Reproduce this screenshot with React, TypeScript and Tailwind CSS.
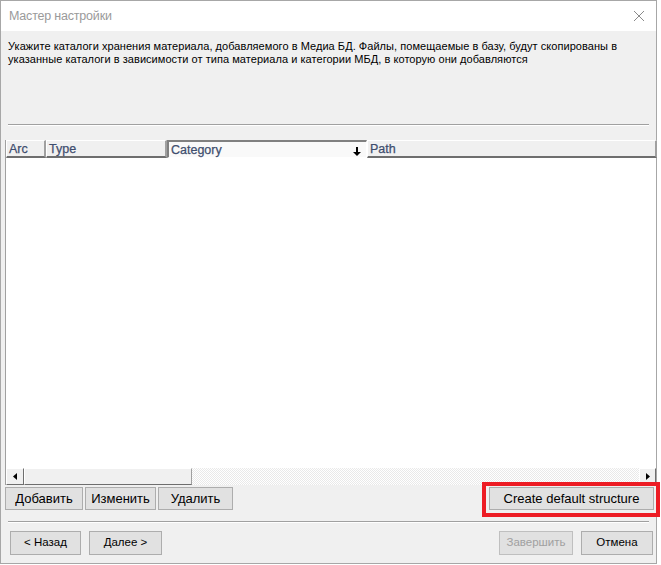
import React from 'react'

const font = { fontFamily: '"Liberation Sans", Arial, sans-serif' }

function HeaderCell({ label, width, pressed = false, sort = false }: { label: string; width: string; pressed?: boolean; sort?: boolean }) {
  return (
    <div
      className={`relative flex h-full shrink-0 items-center px-[2px] pt-[2px] text-[12.5px] text-[#3f4e6e] ${width} ${
        pressed
          ? 'border-t-2 border-l-2 border-t-[#808080] border-l-[#808080] border-b border-r border-b-white border-r-white bg-[#f9f9f9]'
          : 'border-t border-l border-t-white border-l-white border-b-2 border-r-2 border-b-[#6e6e6e] border-r-[#a0a0a0] bg-[#f0f0f0]'
      }`}
    >
      <span className="[-webkit-text-stroke:0.25px_#3f4e6e]">{label}</span>
      {sort && (
        <svg className="absolute right-[5px] top-[5px]" width="8" height="9" viewBox="0 0 8 9">
          <path d="M3 0h2v5h3L4 9 0 5h3z" fill="#000" />
        </svg>
      )}
    </div>
  )
}

function Btn({ children, className = '', disabled = false }: { children: React.ReactNode; className?: string; disabled?: boolean }) {
  return (
    <button
      className={`flex items-center justify-center border border-[#adadad] bg-[#e1e1e1] ${
        disabled ? 'border-[#bfbfbf] bg-[#cccccc]/40 text-[#a0a0a0]' : 'text-black'
      } ${className}`}
    >
      {children}
    </button>
  )
}

function Separator({ className = '' }: { className?: string }) {
  return <div className={`h-[2px] border-t border-t-[#a0a0a0] border-b border-b-white ${className}`} />
}

export default function App() {
  return (
    <div className="relative h-[565px] w-[661px] overflow-hidden bg-white" style={font}>
      <div className="flex h-[564px] w-[657px] flex-col border border-[#a7a7a7] bg-[#f0f0f0]">
        {/* title */}
        <div className="flex h-[30px] shrink-0 items-center justify-between bg-white pl-[8px] pr-[6px]">
          <span className="text-[12.5px] tracking-[-0.2px] text-[#9a9a9a]">Мастер настройки</span>
          <svg width="12" height="12" viewBox="0 0 12 12" className="mr-[5px]">
            <path d="M1 1l10 10M11 1L1 11" stroke="#8a8a8a" strokeWidth="1" />
          </svg>
        </div>

        {/* description */}
        <div className="h-[93px] shrink-0 px-[7px] pt-[9px] text-[11px] leading-[13px] tracking-[0.05px] text-black">
          Укажите каталоги хранения материала, добавляемого в Медиа БД. Файлы, помещаемые в базу, будут скопированы в
          <br />
          указанные каталоги в зависимости от типа материала и категории МБД, в которую они добавляются
        </div>

        <Separator className="mx-[7px]" />

        {/* table */}
        <div className="ml-[4px] mt-[14px] flex h-[345px] w-[651px] shrink-0 flex-col border-l border-l-[#a0a0a0]">
          <div className="flex h-[18px] shrink-0">
            <HeaderCell label="Arc" width="w-[40px]" />
            <HeaderCell label="Type" width="w-[121px]" />
            <HeaderCell label="Category" width="w-[200px]" pressed sort />
            <HeaderCell label="Path" width="w-[290px]" />
          </div>
          <div className="flex-1 bg-white" />
          <div className="flex h-[17px] shrink-0">
            <div className="flex w-[18px] items-center justify-center border-t border-l border-t-white border-l-white border-b border-r border-b-[#6e6e6e] border-r-[#6e6e6e] bg-[#f0f0f0]">
              <svg width="4" height="7" viewBox="0 0 4 7">
                <path d="M4 0v7L0 3.5z" fill="#000" />
              </svg>
            </div>
            <div className="w-[168px] border-t border-l border-t-white border-l-white border-b border-r border-b-[#6e6e6e] border-r-[#a0a0a0] bg-[#f0f0f0]" />
            <div className="flex-1 bg-[#f6f6f6] bg-[image:repeating-conic-gradient(#ffffff_0%_25%,#e9e9e9_0%_50%)] bg-[length:2px_2px]" />
            <div className="flex w-[17px] items-center justify-center border-t border-l border-t-white border-l-white border-b border-r border-b-[#6e6e6e] border-r-[#6e6e6e] bg-[#f0f0f0]">
              <svg width="4" height="7" viewBox="0 0 4 7">
                <path d="M0 0v7L4 3.5z" fill="#000" />
              </svg>
            </div>
          </div>
        </div>

        {/* table buttons */}
        <div className="ml-[4px] mt-[2px] flex h-[23px] w-[649px] shrink-0 text-[13px]">
          <Btn className="w-[78px]">Добавить</Btn>
          <Btn className="ml-[2px] w-[71px]">Изменить</Btn>
          <Btn className="ml-[2px] w-[75px]">Удалить</Btn>
          <Btn className="ml-auto w-[165px] text-[13px]">Create default structure</Btn>
        </div>

        <Separator className="mx-[7px] mt-[11px]" />

        {/* wizard buttons */}
        <div className="ml-[9px] mt-[8px] flex h-[24px] w-[643px] shrink-0 text-[11.5px]">
          <Btn className="w-[71px]">&lt; Назад</Btn>
          <Btn className="ml-[8px] w-[73px]">Далее &gt;</Btn>
          <Btn className="ml-auto w-[74px]" disabled>
            Завершить
          </Btn>
          <Btn className="ml-[8px] w-[72px]">Отмена</Btn>
        </div>
      </div>

      {/* red annotation box */}
      <div className="absolute left-[482px] top-[482px] h-[35px] w-[178px] border-[4px] border-[#ed1c24]" />
    </div>
  )
}
